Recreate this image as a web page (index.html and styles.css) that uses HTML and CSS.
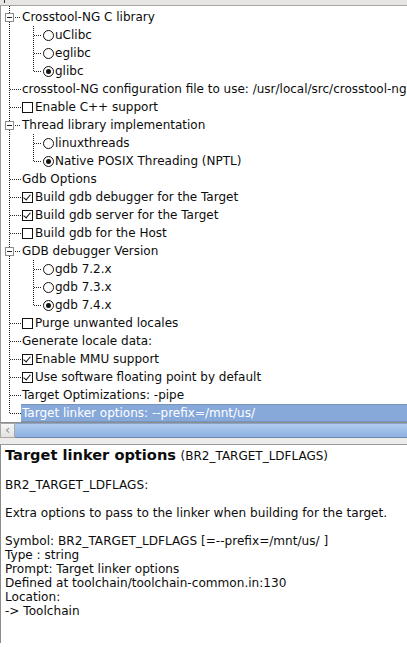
FILE: index.html
```html
<!DOCTYPE html>
<html>
<head>
<meta charset="utf-8">
<link rel="stylesheet" href="styles.css">
</head>
<body>
<div class="app">
  <div class="header"><span class="tick"></span></div>
  <div class="tree">
    <div class="row"><span class="gut exp"><span class="box"></span></span><span class="lbl">Crosstool-NG C library</span></div>
    <div class="group">
      <div class="row"><span class="gut"></span><span class="gut2"></span><span class="radio"></span><span class="lbl">uClibc</span></div>
      <div class="row"><span class="gut"></span><span class="gut2"></span><span class="radio"></span><span class="lbl">eglibc</span></div>
      <div class="row"><span class="gut"></span><span class="gut2"></span><span class="radio on"></span><span class="lbl">glibc</span></div>
    </div>
    <div class="row"><span class="gut line"></span><span class="lbl">crosstool-NG configuration file to use: /usr/local/src/crosstool-ng</span></div>
    <div class="row"><span class="gut line"></span><span class="check"></span><span class="lbl">Enable C++ support</span></div>
    <div class="row"><span class="gut exp"><span class="box"></span></span><span class="lbl">Thread library implementation</span></div>
    <div class="group">
      <div class="row"><span class="gut"></span><span class="gut2"></span><span class="radio"></span><span class="lbl">linuxthreads</span></div>
      <div class="row"><span class="gut"></span><span class="gut2"></span><span class="radio on"></span><span class="lbl">Native POSIX Threading (NPTL)</span></div>
    </div>
    <div class="row"><span class="gut line"></span><span class="lbl">Gdb Options</span></div>
    <div class="row"><span class="gut line"></span><span class="check on"></span><span class="lbl">Build gdb debugger for the Target</span></div>
    <div class="row"><span class="gut line"></span><span class="check on"></span><span class="lbl">Build gdb server for the Target</span></div>
    <div class="row"><span class="gut line"></span><span class="check"></span><span class="lbl">Build gdb for the Host</span></div>
    <div class="row"><span class="gut exp"><span class="box"></span></span><span class="lbl">GDB debugger Version</span></div>
    <div class="group">
      <div class="row"><span class="gut"></span><span class="gut2"></span><span class="radio"></span><span class="lbl">gdb 7.2.x</span></div>
      <div class="row"><span class="gut"></span><span class="gut2"></span><span class="radio"></span><span class="lbl">gdb 7.3.x</span></div>
      <div class="row"><span class="gut"></span><span class="gut2"></span><span class="radio on"></span><span class="lbl">gdb 7.4.x</span></div>
    </div>
    <div class="row"><span class="gut line"></span><span class="check"></span><span class="lbl">Purge unwanted locales</span></div>
    <div class="row"><span class="gut line"></span><span class="lbl">Generate locale data:</span></div>
    <div class="row"><span class="gut line"></span><span class="check on"></span><span class="lbl">Enable MMU support</span></div>
    <div class="row"><span class="gut line"></span><span class="check on"></span><span class="lbl">Use software floating point by default</span></div>
    <div class="row"><span class="gut line"></span><span class="lbl">Target Optimizations: -pipe</span></div>
    <div class="row"><span class="gut line sel-gut"></span><span class="lbl sel">Target linker options: --prefix=/mnt/us/</span></div>
  </div>
  <div class="hscroll">
    <div class="arrow">&lsaquo;</div>
    <div class="thumb"></div>
  </div>
  <div class="gap"></div>
  <div class="info">
    <div class="title"><b>Target linker options</b> <span class="sym">(BR2_TARGET_LDFLAGS)</span></div>
    <p>BR2_TARGET_LDFLAGS:</p>
    <p>Extra options to pass to the linker when building for the target.</p>
    <p>Symbol: BR2_TARGET_LDFLAGS [=--prefix=/mnt/us/ ]<br>Type : string<br>Prompt: Target linker options<br>Defined at toolchain/toolchain-common.in:130<br>Location:<br>-&gt; Toolchain</p>
  </div>
</div>
</body>
</html>
```

FILE: styles.css
```css
html, body {
  margin: 0;
  padding: 0;
  background: #ffffff;
}
.app {
  width: 407px;
  height: 647px;
  display: flex;
  flex-direction: column;
  font-family: "DejaVu Sans", sans-serif;
  color: #0c0c0c;
  overflow: hidden;
}
.header {
  height: 5px;
  background: #e6e5e3;
  border-bottom: 1px solid #a5a5a3;
  position: relative;
  flex: none;
}
.tick {
  position: absolute;
  left: 4px;
  top: 0;
  width: 1px;
  height: 3px;
  background: #333;
}
.tree {
  flex: none;
  padding-top: 2px;
  border-left: 1px solid #9a9a9a;
  border-bottom: 1px solid #8e8e8e;
  font-size: 12px;
  white-space: nowrap;
  overflow: hidden;
  background-image: repeating-linear-gradient(to bottom, #222 0 1px, transparent 1px 2px);
  background-size: 1px calc(100% - 9px);
  background-position: 8px 0;
  background-repeat: no-repeat;
}
.group {
  background-image: repeating-linear-gradient(to bottom, #222 0 1px, transparent 1px 2px);
  background-size: 1px calc(100% - 9px);
  background-position: 32px 0;
  background-repeat: no-repeat;
}
.row {
  height: 18px;
  display: flex;
  align-items: center;
  line-height: 18px;
}
.gut {
  width: 21px;
  height: 18px;
  flex: none;
  position: relative;
}
.gut.line {
  background-image: repeating-linear-gradient(to right, #222 0 1px, transparent 1px 2px);
  background-size: 12px 1px;
  background-position: 9px 9px;
  background-repeat: no-repeat;
}
.gut.sel-gut {
  width: 20px;
  background-size: 11px 1px;
}
.gut.exp {
  background-image: repeating-linear-gradient(to right, #222 0 1px, transparent 1px 2px);
  background-size: 6px 1px;
  background-position: 14px 9px;
  background-repeat: no-repeat;
}
.box {
  position: absolute;
  left: 4px;
  top: 5px;
  width: 7px;
  height: 7px;
  border: 1px solid #8c8c8c;
  background: #fff;
}
.box::after {
  content: "";
  position: absolute;
  left: 1px;
  top: 3px;
  width: 5px;
  height: 1px;
  background: #222;
}
.gut2 {
  width: 21px;
  height: 18px;
  flex: none;
  background-image: repeating-linear-gradient(to right, #222 0 1px, transparent 1px 2px);
  background-size: 8px 1px;
  background-position: 12px 9px;
  background-repeat: no-repeat;
}
.radio {
  width: 9px;
  height: 9px;
  border: 1px solid #111;
  border-radius: 50%;
  margin-right: 1px;
  flex: none;
  position: relative;
  background: #fff;
}
.radio.on::after {
  content: "";
  position: absolute;
  left: 2px;
  top: 2px;
  width: 5px;
  height: 5px;
  border-radius: 50%;
  background: #111;
}
.check {
  width: 9px;
  height: 9px;
  border: 1px solid #111;
  margin-right: 2px;
  flex: none;
  position: relative;
  background: #fff;
}
.check.on::after {
  content: "";
  position: absolute;
  left: 2px;
  top: 0px;
  width: 3px;
  height: 6px;
  border-right: 1.5px solid #111;
  border-bottom: 1.5px solid #111;
  transform: rotate(40deg);
}
.lbl {
  padding-left: 0;
}
.sel {
  flex: 1;
  height: 18px;
  box-sizing: border-box;
  padding-left: 1px;
  line-height: 16px;
  background: #87a9da;
  border-top: 1px solid #7994bb;
  border-bottom: 1px solid #7994bb;
  color: #ffffff;
}
.hscroll {
  flex: none;
  height: 15px;
  display: flex;
}
.arrow {
  width: 15px;
  box-sizing: border-box;
  border: 1px solid #a8a8a8;
  background: linear-gradient(#f7f7f6, #e3e2e0);
  color: #8a8a8a;
  font-size: 13px;
  line-height: 11px;
  text-align: center;
}
.thumb {
  flex: 1;
  background: linear-gradient(#b0cbee, #8db1e2);
  border-bottom: 1px solid #6d87aa;
  border-top: 1px solid #8aa4c8;
  box-sizing: border-box;
}
.gap {
  flex: none;
  height: 6px;
  background: #edeceb;
}
.info {
  flex: 1;
  border-top: 1px solid #9a9a9a;
  border-left: 1px solid #8c8c8c;
  margin-bottom: 4px;
  padding: 2px 4px 0;
  font-size: 12.1px;
  line-height: 14px;
  white-space: nowrap;
}
.title {
  line-height: 16px;
  font-size: 14.6px;
}
.title b {
  font-weight: bold;
}
.title .sym {
  font-size: 12px;
}
.info p {
  margin: 14px 0 0;
}
```
